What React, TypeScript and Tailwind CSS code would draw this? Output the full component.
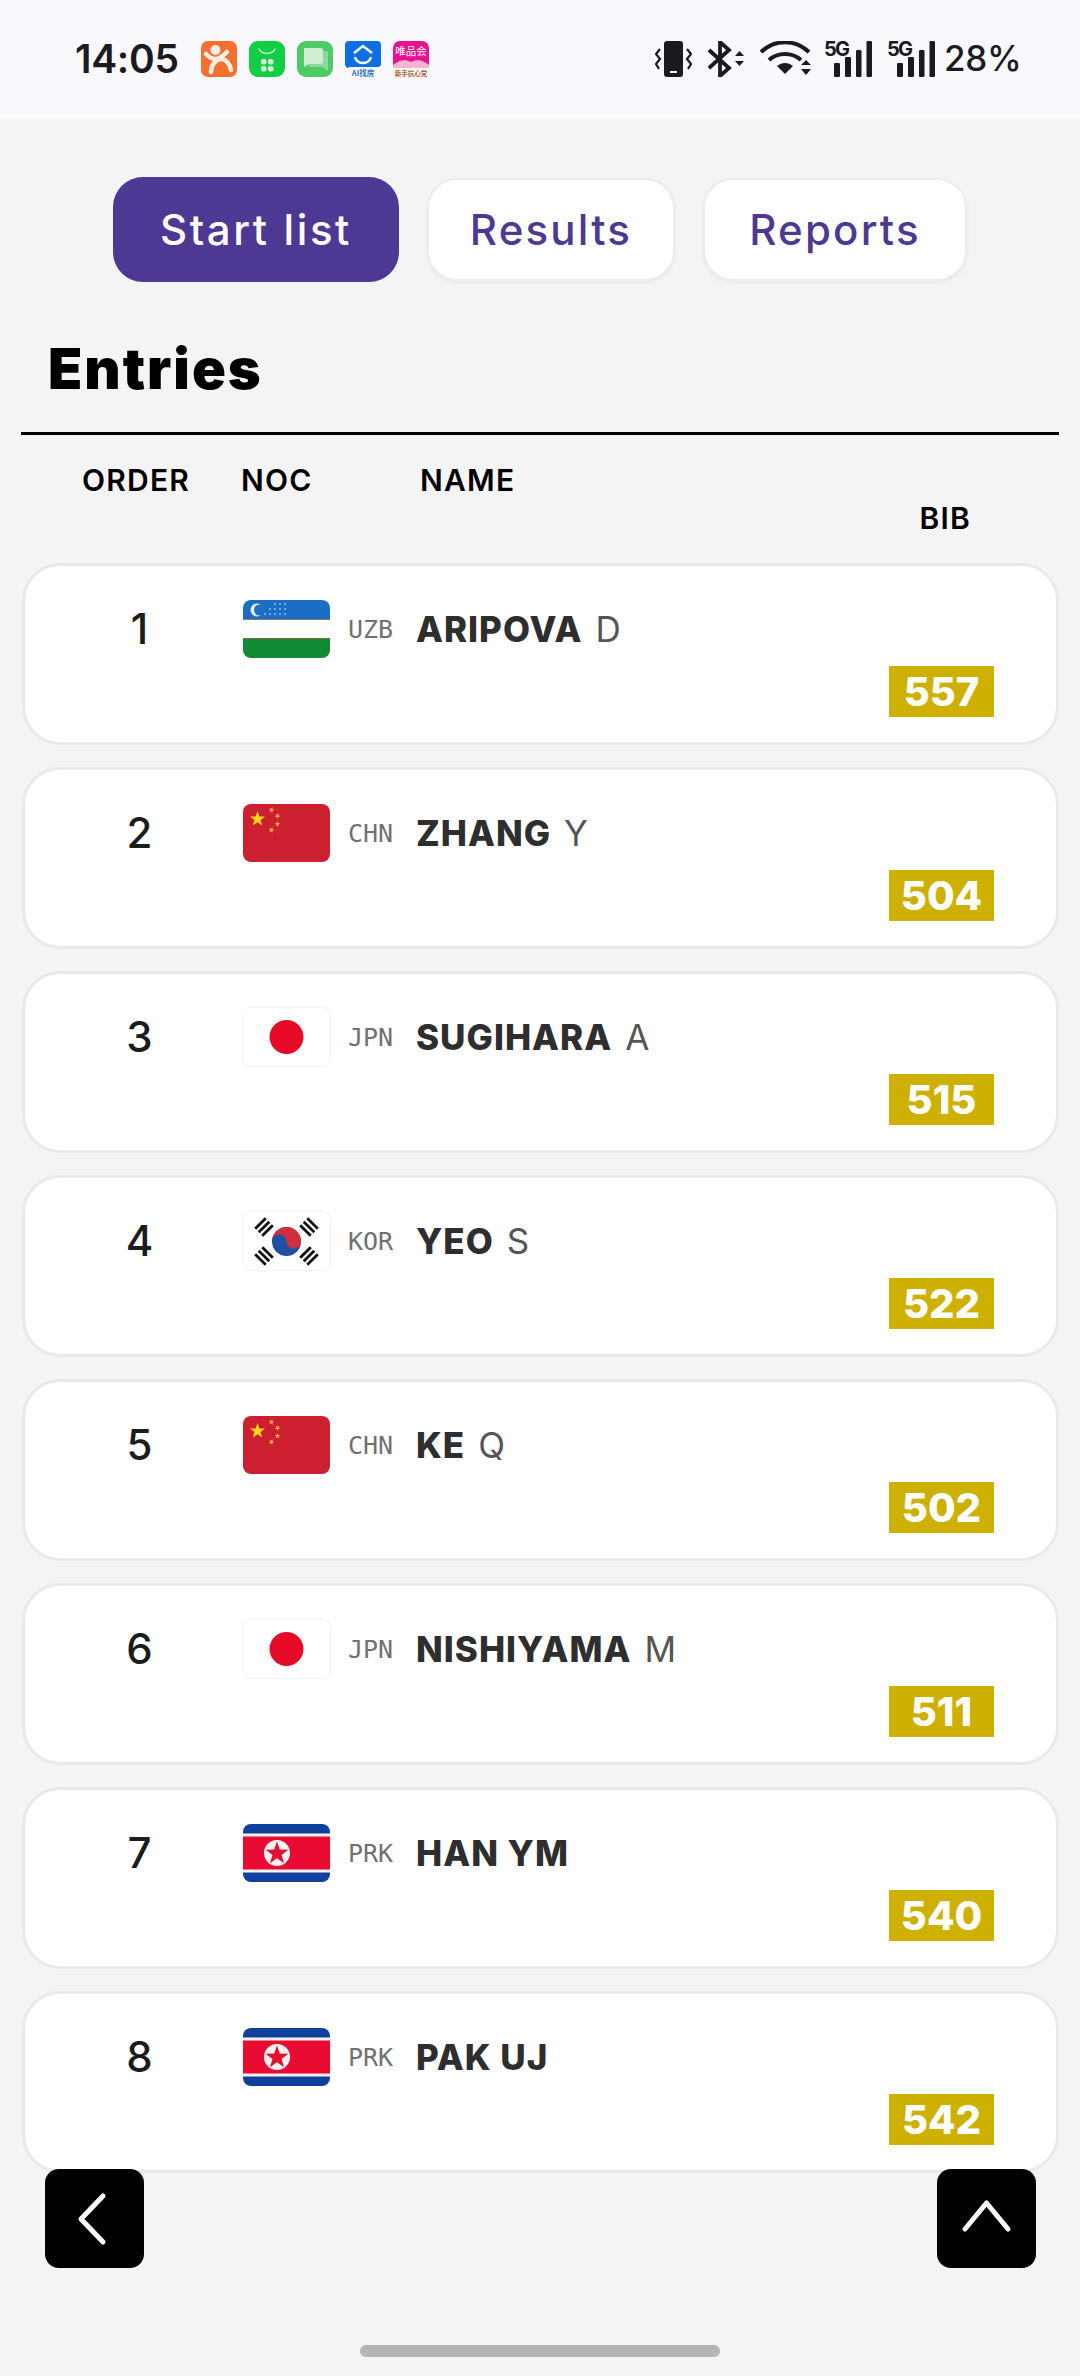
import React from "react";

const sans = "font-['Inter','Noto_Sans',sans-serif]";

function Star({ cx, cy, r, fill, rot = 0 }: { cx: number; cy: number; r: number; fill: string; rot?: number }) {
  const pts: string[] = [];
  for (let i = 0; i < 10; i++) {
    const a = ((-90 + rot + i * 36) * Math.PI) / 180;
    const rr = i % 2 === 0 ? r : r * 0.4;
    pts.push(`${cx + rr * Math.cos(a)},${cy + rr * Math.sin(a)}`);
  }
  return <polygon points={pts.join(" ")} fill={fill} />;
}

function FlagSvg({ noc }: { noc: string }) {
  if (noc === "UZB") {
    const dots: React.ReactElement[] = [];
    const rows = [[32, 37, 42], [27, 32, 37, 42], [22, 27, 32, 37, 42]];
    rows.forEach((r, i) => r.forEach((x) => dots.push(<circle key={`${i}-${x}`} cx={x} cy={4 + i * 5} r={0.8} fill="#dfeaf8" />)));
    return (
      <svg viewBox="0 0 87 58" className="w-full h-full block">
        <rect width="87" height="19" fill="#1a6fc4" />
        <rect y="19" width="87" height="1" fill="#8a7a8a" />
        <rect y="20" width="87" height="18" fill="#fdfdfd" />
        <rect y="38" width="87" height="1" fill="#8a6a3f" />
        <rect y="39" width="87" height="19" fill="#118a36" />
        <circle cx="14" cy="10" r="6.5" fill="#e6f0fa" />
        <circle cx="16.5" cy="10" r="5.5" fill="#1a6fc4" />
        {dots}
      </svg>
    );
  }
  if (noc === "CHN") {
    return (
      <svg viewBox="0 0 87 58" className="w-full h-full block">
        <rect width="87" height="58" fill="#cc2030" />
        <Star cx={14.5} cy={15} r={8} fill="#f8d81c" />
        <Star cx={28.5} cy={6} r={3} fill="#f6b04a" rot={20} />
        <Star cx={34.5} cy={12} r={3} fill="#f6b04a" rot={40} />
        <Star cx={34.5} cy={20} r={3} fill="#f6b04a" />
        <Star cx={28.5} cy={26} r={3} fill="#f6b04a" rot={20} />
      </svg>
    );
  }
  if (noc === "JPN") {
    return (
      <svg viewBox="0 0 87 58" className="w-full h-full block">
        <rect width="87" height="58" fill="#ffffff" />
        <circle cx="43.5" cy="29" r="17" fill="#e60a26" />
      </svg>
    );
  }
  if (noc === "KOR") {
    const Tri = ({ x, y, rot }: { x: number; y: number; rot: number }) => (
      <g transform={`translate(${x} ${y}) rotate(${rot})`}>
        {[-5, 0, 5].map((d) => (
          <rect key={d} x={-7.5} y={d - 1.4} width={15} height={2.8} fill="#111" />
        ))}
      </g>
    );
    return (
      <svg viewBox="0 0 87 58" className="w-full h-full block">
        <rect width="87" height="58" fill="#ffffff" />
        <Tri x={21} y={15} rot={-45} />
        <Tri x={66} y={15} rot={45} />
        <Tri x={21} y={44} rot={45} />
        <Tri x={66} y={44} rot={-45} />
        <circle cx="43.5" cy="29.5" r="14.5" fill="#1e4fa3" />
        <path d="M29 29.5a14.5 14.5 0 0 1 29 0c0 3.8-3.2 7-7.2 7s-7.2-3.3-7.3-7c-.1-3.7-3.2-7-7.2-7s-7.3 3.2-7.3 7z" fill="#d12f3d" />
      </svg>
    );
  }
  return (
    <svg viewBox="0 0 87 58" className="w-full h-full block">
      <rect width="87" height="58" fill="#10409c" />
      <rect y="9.5" width="87" height="39" fill="#f8f4f4" />
      <rect y="12.5" width="87" height="33" fill="#ea0b33" />
      <circle cx="34" cy="29" r="13" fill="#fbf2f2" />
      <Star cx={34} cy={29.5} r={12} fill="#e1112f" />
    </svg>
  );
}

const ROWS = [
  { o: 1, noc: "UZB", last: "ARIPOVA", first: "D", bib: "557" },
  { o: 2, noc: "CHN", last: "ZHANG", first: "Y", bib: "504" },
  { o: 3, noc: "JPN", last: "SUGIHARA", first: "A", bib: "515" },
  { o: 4, noc: "KOR", last: "YEO", first: "S", bib: "522" },
  { o: 5, noc: "CHN", last: "KE", first: "Q", bib: "502" },
  { o: 6, noc: "JPN", last: "NISHIYAMA", first: "M", bib: "511" },
  { o: 7, noc: "PRK", last: "HAN YM", first: "", bib: "540" },
  { o: 8, noc: "PRK", last: "PAK UJ", first: "", bib: "542" },
];

function Card({ o, noc, last, first, bib }: (typeof ROWS)[number]) {
  const white = noc === "JPN" || noc === "KOR";
  return (
    <div className="h-[182px] shrink-0 rounded-[38px] bg-white border-[3px] border-[#e9e9e9] flex flex-col pt-[34px] pr-[62px]">
      <div className="flex items-center h-[58px]">
        <div className="w-[218px] shrink-0 pl-[11px] text-center text-[42px] leading-none text-[#1c1c1c] font-medium">{o}</div>
        <div className={`w-[87px] h-[58px] shrink-0 rounded-[8px] overflow-hidden ${white ? "shadow-[0_0_3px_rgba(0,0,0,0.14)]" : ""}`}>
          <FlagSvg noc={noc} />
        </div>
        <div className="ml-[18px] w-[68px] shrink-0 font-['DejaVu_Sans_Mono',monospace] text-[25px] leading-none text-[#717171] font-normal">{noc}</div>
        <div className="text-[35px] leading-none text-[#2e2e2e] font-extrabold whitespace-nowrap tracking-[1px]">
          {last}
          {first && <span className="font-normal text-[#555] ml-[13px]">{first}</span>}
        </div>
      </div>
      <div className="flex justify-end mt-[8px]">
        <div className="w-[105px] h-[51px] bg-[#ceb100] text-white font-extrabold text-[40px] leading-[51px] text-center">{bib}</div>
      </div>
    </div>
  );
}

function Tab({ label, active }: { label: string; active?: boolean }) {
  return active ? (
    <div className="w-[286px] h-[105px] rounded-[30px] bg-[#4d3893] text-white text-[42px] font-medium tracking-[2.6px] flex items-center justify-center">{label}</div>
  ) : (
    <div className={`h-[103px] rounded-[30px] bg-white border-[2px] border-[#ececec] shadow-[0_2px_4px_rgba(0,0,0,0.05)] text-[#4d3893] text-[42px] font-medium tracking-[2.2px] flex items-center justify-center ${label === "Results" ? "w-[248px]" : "w-[264px]"}`}>{label}</div>
  );
}

function AppIcons() {
  return (
    <div className="flex gap-[12px] ml-[25px]">
      <svg viewBox="0 0 36 36" className="w-[36px] h-[36px]">
        <rect width="36" height="36" rx="7" fill="#f5702f" />
        <circle cx="14.5" cy="9" r="5" fill="#fdeee4" />
        <path d="M5 13c3 3 6 5 9 5s8-3 12-7M10 31c0-7 5-13 10-13s9 5 10 11" fill="none" stroke="#fdeee4" strokeWidth="4.5" strokeLinecap="round" />
      </svg>
      <svg viewBox="0 0 36 36" className="w-[36px] h-[36px]">
        <rect width="36" height="36" rx="9" fill="#10cf45" />
        <path d="M10 8c3 6 13 6 16 0" fill="none" stroke="#c9f5d4" strokeWidth="1.4" strokeLinecap="round" />
        <rect x="12" y="18" width="5.5" height="5.5" rx="2" fill="#d6f7df" />
        <rect x="19" y="18" width="5.5" height="5.5" rx="2" fill="#d6f7df" />
        <rect x="12" y="25" width="5.5" height="5.5" rx="2" fill="#d6f7df" />
        <rect x="19" y="25" width="5.5" height="5.5" rx="2" fill="#d6f7df" />
      </svg>
      <svg viewBox="0 0 36 36" className="w-[36px] h-[36px]">
        <rect width="36" height="36" rx="9" fill="#4ecb66" />
        <path d="M11 10h19a1 1 0 0 1 1 1v19l-6-4H14a3 3 0 0 1-3-3z" fill="#8bd99a" />
        <path d="M7 7h17a2 2 0 0 1 2 2v12a2 2 0 0 1-2 2H12l-5 3z" fill="#cdeed3" />
      </svg>
      <svg viewBox="0 0 36 36" className="w-[36px] h-[36px] overflow-visible">
        <path d="M4 0h28a4 4 0 0 1 4 4v20a4 4 0 0 1-4 2H5l-3 1-2-3V4a4 4 0 0 1 4-4z" fill="#0e6fe4" />
        <path d="M9 12l9-7 9 7" fill="none" stroke="#fff" strokeWidth="2.5" />
        <path d="M10 16c2 8 14 8 16 0" fill="none" stroke="#fff" strokeWidth="2.5" />
        <text x="18" y="35" textAnchor="middle" fontSize="7.5" fontWeight="600" fill="#2a6fc8" fontFamily="'Noto Sans CJK SC',sans-serif">AI找房</text>
      </svg>
      <svg viewBox="0 0 36 36" className="w-[36px] h-[36px] overflow-visible">
        <path d="M7 0h22a7 7 0 0 1 7 7v19c-6-5-12-6-18-3-6-3-12-2-18 3V7a7 7 0 0 1 7-7z" fill="#e6128f" />
        <path d="M0 24c6-5 12-6 18-3 6-3 12-2 18 3v3H0z" fill="#f5b5cf" />
        <text x="18" y="14" textAnchor="middle" fontSize="10.5" fill="#fff" fontFamily="'Noto Sans CJK SC',sans-serif">唯品会</text>
        <text x="18" y="35" textAnchor="middle" fontSize="6.5" fontWeight="700" fill="#a8622e" fontFamily="'Noto Sans CJK SC',sans-serif">新手抗心党</text>
      </svg>
    </div>
  );
}

function Signal() {
  return (
    <svg viewBox="0 0 48 36" className="w-[48px] h-[36px] block overflow-visible">
      <text x="0" y="15" fontSize="20" fontWeight="700" fill="#1b1b1f" fontFamily="Inter, sans-serif" letterSpacing="-1.8">5G</text>
      <rect x="10" y="22" width="6" height="14" rx="1.2" fill="#1b1b1f" />
      <rect x="21" y="16" width="6" height="20" rx="1.2" fill="#1b1b1f" />
      <rect x="32" y="9" width="5.5" height="27" rx="1.2" fill="#1b1b1f" />
      <rect x="42.5" y="0" width="5.5" height="36" rx="1.2" fill="#1b1b1f" />
    </svg>
  );
}

function StatusRight() {
  return (
    <div className="ml-auto flex items-center mr-[60px]">
      <svg viewBox="0 0 37 36" className="w-[37px] h-[36px] block">
        <rect x="9" y="0" width="19" height="36" rx="3" fill="#1b1b1f" />
        <rect x="15" y="30" width="7" height="2" fill="#f8f8fd" />
        <path d="M5 8L1 13l4 5-4 5 3 5M32 8l4 5-4 5 4 5-3 5" fill="none" stroke="#1b1b1f" strokeWidth="2.2" />
      </svg>
      <svg viewBox="0 0 37 36" className="w-[37px] h-[36px] block ml-[16px]">
        <path d="M1 9l20 18-9 8V1l9 8L1 27" fill="none" stroke="#1b1b1f" strokeWidth="3.8" />
        <path d="M27 15l4.500-5 4.500 5zM27 20h9l-4.500 5z" fill="#1b1b1f" />
      </svg>
      <svg viewBox="0 0 52 36" className="w-[52px] h-[36px] block ml-[15px]">
        <path d="M1 11c14-13 34-13 48 0" fill="none" stroke="#1b1b1f" strokeWidth="4" />
        <path d="M9 19c9-8 23-8 32 0" fill="none" stroke="#1b1b1f" strokeWidth="4" />
        <path d="M17 25c5-4 11-4 16 0l-8 8z" fill="#1b1b1f" />
        <path d="M41 24l5-5 5 5zM41 28h10l-5 6z" fill="#1b1b1f" />
      </svg>
      <div className="ml-[12px]"><Signal /></div>
      <div className="ml-[15px]"><Signal /></div>
      <div className="ml-[9px] w-[76px] whitespace-nowrap text-[35px] leading-none font-medium text-[#1b1b1f] tracking-[-0.3px]">28%</div>
    </div>
  );
}

export default function App() {
  return (
    <div className={`relative w-[1080px] h-[2376px] overflow-hidden bg-[#f4f4f4] ${sans}`}>
      <div className="h-[119px] bg-[#f8f8fd] flex items-center pl-[75px] pb-[2px]">
        <div className="w-[101px] whitespace-nowrap text-[39px] leading-none font-semibold text-[#1b1b1f] tracking-[-0.3px]">14:05</div>
        <AppIcons />
        <StatusRight />
      </div>

      <div className="flex items-center gap-[28px] pl-[113px] mt-[58px]">
        <Tab label="Start list" active />
        <Tab label="Results" />
        <Tab label="Reports" />
      </div>

      <div className="mx-[21px] mt-[53px] pl-[27px] h-[100px] border-b-[3px] border-black text-[56px] leading-[68px] font-black tracking-[2px] text-black">Entries</div>

      <div className="relative h-[128px] text-[30px] font-semibold tracking-[1.2px] text-black mx-[22px]">
        <div className="flex pt-[27px] leading-[36px]">
          <div className="w-[197px] pl-[60px]">ORDER</div>
          <div className="w-[201px] pl-[22px]">NOC</div>
          <div>NAME</div>
        </div>
        <div className="flex justify-end pr-[87px] mt-[2px] leading-[36px]">BIB</div>
      </div>

      <div className="flex flex-col gap-[22px] pl-[22px] pr-[21px]">
        {ROWS.map((r) => (
          <Card key={r.o} {...r} />
        ))}
      </div>

      <div className="absolute left-[45px] top-[2169px] w-[99px] h-[99px] rounded-[14px] bg-black flex items-center justify-center">
        <svg viewBox="0 0 99 99" className="w-[99px] h-[99px]">
          <path d="M58 27L36 50l22 23" fill="none" stroke="#fff" strokeWidth="5" strokeLinecap="round" strokeLinejoin="round" />
        </svg>
      </div>
      <div className="absolute left-[937px] top-[2169px] w-[99px] h-[99px] rounded-[14px] bg-black flex items-center justify-center">
        <svg viewBox="0 0 99 99" className="w-[99px] h-[99px]">
          <path d="M28 60l21.500-26L71 60" fill="none" stroke="#fff" strokeWidth="5" strokeLinecap="round" strokeLinejoin="round" />
        </svg>
      </div>
      <div className="absolute left-[360px] top-[2345px] w-[360px] h-[12px] rounded-[6px] bg-[#b4b4b4]" />
    </div>
  );
}
